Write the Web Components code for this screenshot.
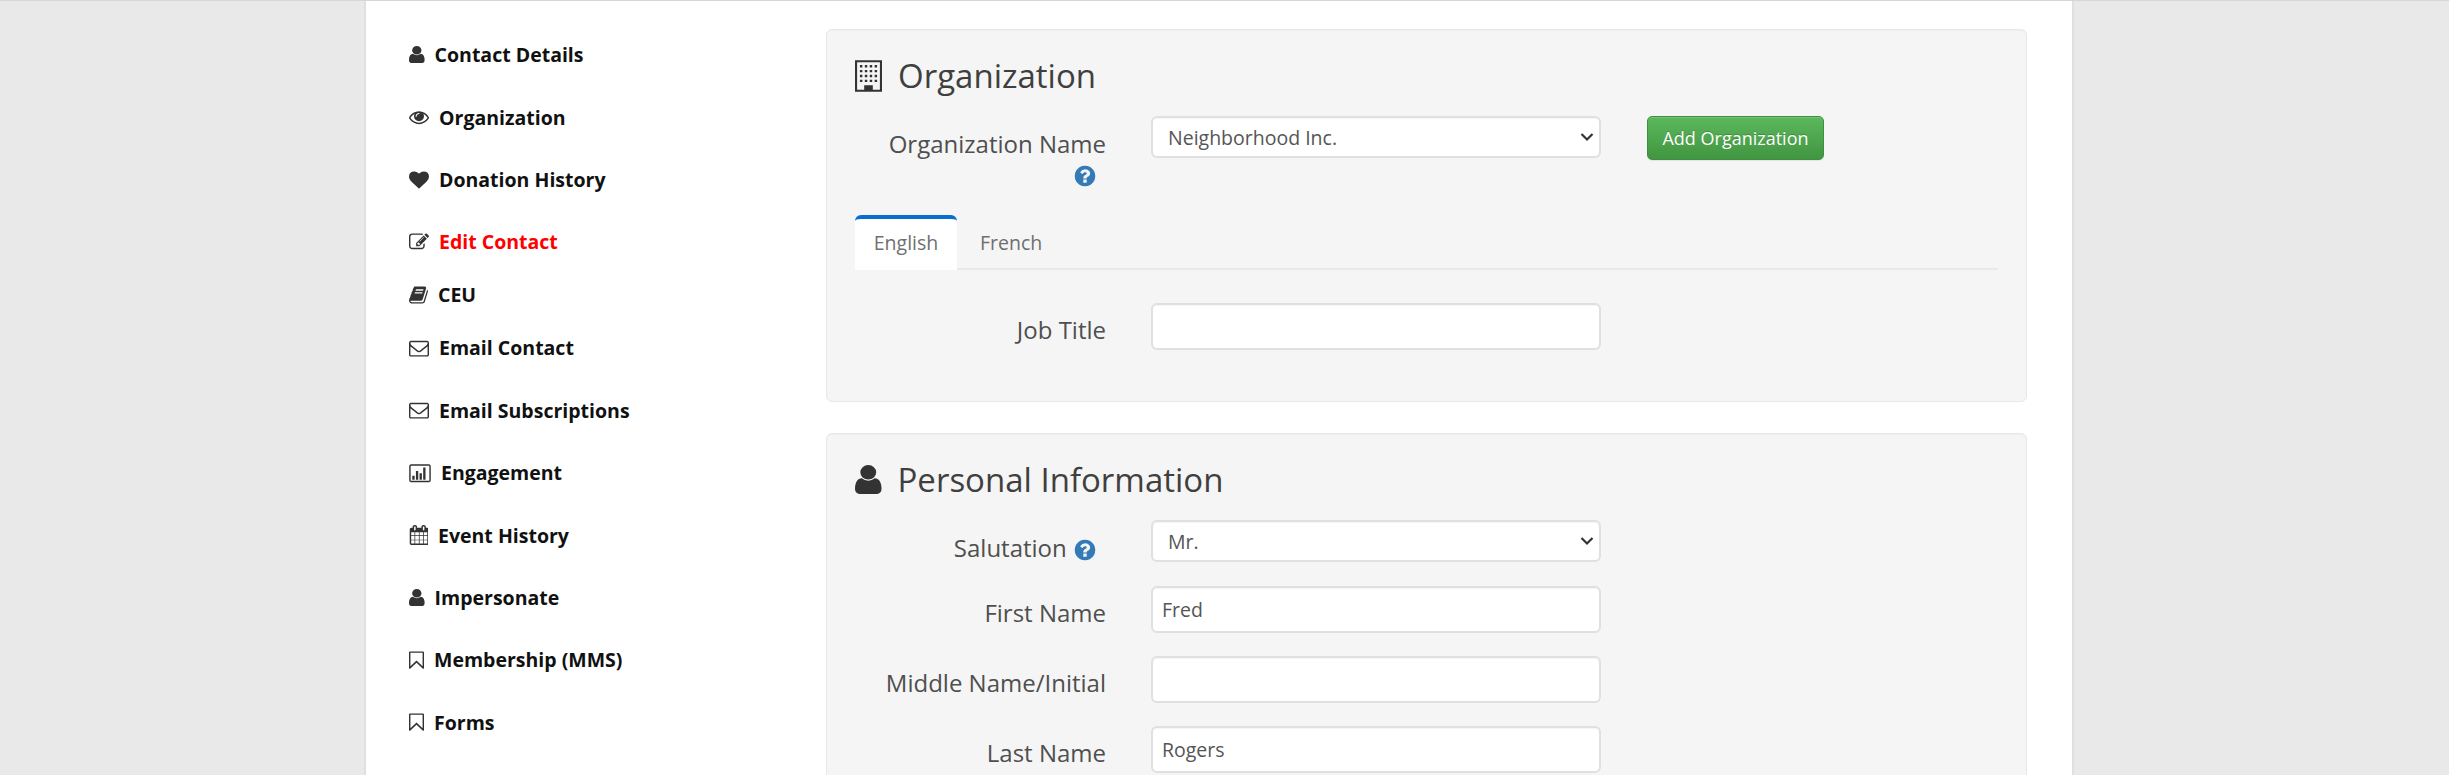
<!DOCTYPE html>
<html lang="en">
<head>
<meta charset="utf-8">
<title>Edit Contact</title>
<style>
  html, body { margin: 0; height: 775px; overflow: hidden; background: #e9e9e9; }
  body { font-family: "Open Sans", sans-serif; }
</style>
</head>
<body>
<contact-page>
  <side-nav slot="nav">
    <nav-item icon="user">Contact Details</nav-item>
    <nav-item icon="eye">Organization</nav-item>
    <nav-item icon="heart">Donation History</nav-item>
    <nav-item icon="edit" active>Edit Contact</nav-item>
    <nav-item icon="book" compact>CEU</nav-item>
    <nav-item icon="envelope">Email Contact</nav-item>
    <nav-item icon="envelope">Email Subscriptions</nav-item>
    <nav-item icon="chart">Engagement</nav-item>
    <nav-item icon="calendar">Event History</nav-item>
    <nav-item icon="user">Impersonate</nav-item>
    <nav-item icon="bookmark">Membership (MMS)</nav-item>
    <nav-item icon="bookmark">Forms</nav-item>
  </side-nav>

  <well-panel icon="building" heading="Organization">
    <form-row label="Organization Name" help="below" type="select" value="Neighborhood Inc.">
      <add-button slot="extra">Add Organization</add-button>
    </form-row>
    <tab-strip></tab-strip>
    <form-row label="Job Title"></form-row>
  </well-panel>

  <well-panel icon="user" heading="Personal Information">
    <form-row label="Salutation" help="inline" type="select" value="Mr."></form-row>
    <form-row label="First Name" value="Fred"></form-row>
    <form-row label="Middle Name/Initial"></form-row>
    <form-row label="Last Name" value="Rogers"></form-row>
  </well-panel>
</contact-page>

<script>
const ICONS = {
  user: { box: "256 128 1280 1536", w: 15.6, h: 17.1, d: "M1536 1399q0 109-62.5 187t-150.5 78h-854q-88 0-150.5-78t-62.5-187q0-85 8.5-160.5t31.5-152 58.5-131 94-89 134.5-34.5q131 128 313 128t313-128q76 0 134.5 34.5t94 89 58.5 131 31.5 152 8.5 160.5zm-256-887q0 159-112.5 271.5t-271.5 112.5-271.5-112.5-112.5-271.5 112.5-271.5 271.5-112.5 271.5 112.5 112.5 271.5z" },
  eye: { box: "0 0 1792 1792", w: 20, d: "M1664 960q-152-236-381-353 61 104 61 225 0 185-131.5 316.5t-316.5 131.5-316.5-131.5-131.5-316.5q0-121 61-225-229 117-381 353 133 205 333.5 326.5t434.5 121.5 434.5-121.5 333.5-326.5zm-720-384q0-20-14-34t-34-14q-125 0-214.5 89.5t-89.5 214.5q0 20 14 34t34 14 34-14 14-34q0-86 61-147t147-61q20 0 34-14t14-34zm848 384q0 34-20 69-140 230-376.5 368.5t-499.5 138.5-499.5-139-376.5-368q-20-35-20-69t20-69q140-229 376.5-368t499.5-139 499.5 139 376.5 368q20 35 20 69z" },
  heart: { box: "0 0 1792 1792", w: 20, d: "M896 1664q-26 0-44-18l-624-602q-10-8-27.5-26t-55.5-65.5-68-97.5-53.5-121-23.5-138q0-220 127-344t351-124q62 0 126.5 21.5t120 58 95.5 68.5 76 68q36-36 76-68t95.5-68.5 120-58 126.5-21.5q224 0 351 124t127 344q0 221-229 450l-623 600q-18 18-44 18z" },
  edit: { box: "0 0 1792 1792", w: 20, d: "M888 1184l116-116-152-152-116 116v56h96v96h56zm440-720q-16-16-33 1l-350 350q-17 17-1 33t33-1l350-350q17-17 1-33zm80 594v190q0 119-84.5 203.5t-203.5 84.5h-832q-119 0-203.5-84.5t-84.5-203.5v-832q0-119 84.5-203.5t203.5-84.5h832q63 0 117 25 15 7 18 23 3 17-9 29l-49 49q-14 14-32 8-23-6-45-6h-832q-66 0-113 47t-47 113v832q0 66 47 113t113 47h832q66 0 113-47t47-113v-126q0-13 9-22l64-64q15-15 35-7t20 29zm-96-738l288 288-672 672h-288v-288zm444 132l-92 92-288-288 92-92q28-28 68-28t68 28l152 152q28 28 28 68t-28 68z" },
  book: { box: "60 0 1672 1792", w: 19, d: "M1703 478q40 57 18 129l-275 906q-19 64-76.5 107.5t-122.5 43.5h-923q-77 0-148.5-53.5t-99.5-131.5q-24-67-2-127 0-4 3-27t4-37q1-8-3-21.5t-3-19.5q2-11 8-21t16.5-23.5 16.5-23.5q23-38 45-91.5t30-91.5q3-10 .5-30t-.5-28q3-11 17-28t17-23q21-36 42-92t25-90q1-9-2.5-32t.5-28q4-13 22-30.5t22-22.5q19-26 42.5-84.5t27.5-96.5q1-8-3-25.5t-2-26.5q2-8 9-18t18-23 17-21q8-12 16.5-30.5t15-35 16-36 19.5-32 26.5-23.5 36-11.5 47.5 5.5l-1 3q38-9 51-9h761q74 0 114 56t18 130l-274 906q-36 119-71.5 153.5t-128.5 34.5h-869q-27 0-38 15-11 16-1 43 24 70 144 70h923q29 0 56-15.5t35-41.5l300-987q7-22 5-57 38 15 59 43zm-1064 2q-4 13 2 22.5t20 9.5h608q13 0 25.5-9.5t16.5-22.5l21-64q4-13-2-22.5t-20-9.5h-608q-13 0-25.5 9.5t-16.5 22.5zm-83 256q-4 13 2 22.5t20 9.5h608q13 0 25.5-9.5t16.5-22.5l21-64q4-13-2-22.5t-20-9.5h-608q-13 0-25.5 9.5t-16.5 22.5z" },
  envelope: { box: "0 0 1792 1792", w: 20, d: "M1664 1504v-768q-32 36-69 66-268 206-426 338-51 43-83 67t-86.5 48.5-102.5 24.5h-2q-48 0-102.5-24.5t-86.5-48.5-83-67q-158-132-426-338-37-30-69-66v768q0 13 9.5 22.5t22.5 9.5h1472q13 0 22.5-9.5t9.5-22.5zm0-1051v-24.5l-.5-13-3-12.5-5.5-9-9-7.5-14-2.5h-1472q-13 0-22.5 9.5t-9.5 22.5q0 168 147 284 193 152 401 317 6 5 35 29.5t46 37.5 44.5 31.5 50.5 27.5 43 9h2q20 0 43-9t50.5-27.5 44.5-31.5 46-37.5 35-29.5q208-165 401-317 54-43 100.5-115.5t46.5-131.5zm128-37v1088q0 66-47 113t-113 47h-1472q-66 0-113-47t-47-113v-1088q0-66 47-113t113-47h1472q66 0 113 47t47 113z" },
  chart: { box: "0 0 2000 1792", w: 22, d: "M200 120h1600a180 180 0 0 1 180 180v1240a180 180 0 0 1-180 180H200a180 180 0 0 1-180-180V300a180 180 0 0 1 180-180zm0 130a50 50 0 0 0-50 50v1240a50 50 0 0 0 50 50h1600a50 50 0 0 0 50-50V300a50 50 0 0 0-50-50zM300 1150h210v340H300zm330-430h210v770H630zm330 200h210v570H960zm330-520h210v1090h-210z" },
  calendar: { box: "0 0 1664 1792", w: 19, d: "M192 1664h288v-288h-288v288zm352 0h320v-288h-320v288zm-352-352h288v-320h-288v320zm352 0h320v-320h-320v320zm-352-384h288v-288h-288v288zm736 736h320v-288h-320v288zm-384-736h320v-288h-320v288zm768 736h288v-288h-288v288zm-384-352h320v-320h-320v320zm-352-864v-288q0-13-9.5-22.5t-22.5-9.5h-64q-13 0-22.5 9.5t-9.5 22.5v288q0 13 9.5 22.5t22.5 9.5h64q13 0 22.5-9.5t9.5-22.5zm736 864h288v-320h-288v320zm-384-384h320v-288h-320v288zm384 0h288v-288h-288v288zm32-480v-288q0-13-9.5-22.5t-22.5-9.5h-64q-13 0-22.5 9.5t-9.5 22.5v288q0 13 9.5 22.5t22.5 9.5h64q13 0 22.5-9.5t9.5-22.5zm384-64v1280q0 52-38 90t-90 38h-1408q-52 0-90-38t-38-90v-1280q0-52 38-90t90-38h128v-96q0-66 47-113t113-47h64q66 0 113 47t47 113v96h384v-96q0-66 47-113t113-47h64q66 0 113 47t47 113v96h128q52 0 90 38t38 90z" },
  bookmark: { box: "0 0 1344 1792", w: 15, d: "M100 128h1144a100 100 0 0 1 100 100v1400a60 60 0 0 1-100 44L672 1150 100 1672a60 60 0 0 1-100-44V228a100 100 0 0 1 100-100zm28 128v1190l544-500 544 500V256z" },
  building: { box: "0 0 1408 1792", w: 15.9, d: "M0 64h1408v1664H0zm110 110v1444h370v-230h448v230h370V174zM256 320h128v128H256zm256 0h128v128H512zm256 0h128v128H768zm256 0h128v128h-128zM256 576h128v128H256zm256 0h128v128H512zm256 0h128v128H768zm256 0h128v128h-128zM256 832h128v128H256zm256 0h128v128H512zm256 0h128v128H768zm256 0h128v128h-128zM256 1088h128v128H256zm256 0h128v128H512zm256 0h128v128H768zm256 0h128v128h-128z" },
  question: { box: "0 0 1792 1792", w: 20, d: "M1024 1376v-192q0-14-9-23t-23-9h-192q-14 0-23 9t-9 23v192q0 14 9 23t23 9h192q14 0 23-9t9-23zm256-672q0-88-55.5-163t-138.5-116-170-41q-243 0-371 213-15 24 8 42l132 100q7 6 19 6 16 0 25-12 53-68 86-92 34-24 86-24 48 0 85.5 26t37.5 59q0 38-20 61t-68 45q-63 28-115.5 86.5t-52.5 125.5v36q0 14 9 23t23 9h192q14 0 23-9t9-23q0-19 21.5-49.5t54.5-49.5q32-18 49-28.5t46-35 44.5-48 28-60.5 12.5-81zm384 192q0 209-103 385.5t-279.5 279.5-385.5 103-385.5-103-279.5-279.5-103-385.5 103-385.5 279.5-279.5 385.5-103 385.5 103 279.5 279.5 103 385.5z" }
};

function iconSvg(name, height) {
  const icon = ICONS[name];
  const width = icon.w * height / 20;
  const glyphHeight = (icon.h || 20) * height / 20;
  return `<svg width="${width}" height="${glyphHeight}" viewBox="${icon.box}" preserveAspectRatio="none" fill="currentColor" aria-hidden="true"><path d="${icon.d}"/></svg>`;
}

class ContactPage extends HTMLElement {
  connectedCallback() {
    this.attachShadow({ mode: "open" }).innerHTML = `
      <style>
        :host { display: block; margin-left: 364px; width: 1710px; height: 775px; box-sizing: border-box; background: #fff; border-left: 2px solid #e0e0e0; border-right: 2px solid #e0e0e0; }
        .top { height: 1px; background: #d6d6d6; }
        .wrap { margin-left: -366px; width: 2449px; }
        .columns { display: grid; grid-template-columns: 460px 1201px; }
        .panels { display: flex; flex-direction: column; gap: 31px; padding-top: 28px; }
      </style>
      <div class="wrap"><div class="top"></div></div>
      <div class="columns">
        <slot name="nav"></slot>
        <div class="panels"><slot></slot></div>
      </div>`;
  }
}

class SideNav extends HTMLElement {
  connectedCallback() {
    this.attachShadow({ mode: "open" }).innerHTML = `
      <style>
        :host { display: block; padding: 22.6px 0 0 43px; }
      </style>
      <slot></slot>`;
  }
}

class NavItem extends HTMLElement {
  connectedCallback() {
    this.attachShadow({ mode: "open" }).innerHTML = `
      <style>
        :host { display: flex; align-items: center; gap: 10px; height: 62.4px; font-size: 19.5px; font-weight: 700; color: #111; }
        :host([compact]) { height: 43.6px; }
        :host([active]) { color: #f00; }
        svg { color: #333; flex: none; }
      </style>
      ${iconSvg(this.getAttribute("icon"), 20)}
      <span><slot></slot></span>`;
  }
}

class WellPanel extends HTMLElement {
  connectedCallback() {
    this.attachShadow({ mode: "open" }).innerHTML = `
      <style>
        :host { display: block; box-sizing: border-box; padding: 0 28px 51px 28px; background: #f5f5f5; border: 1px solid #e8e8e8; border-radius: 6px; box-shadow: inset 0 1px 1px rgba(0,0,0,.03); }
        h3 { display: flex; align-items: center; gap: 16px; height: 42px; margin: 0; padding: 25px 0 19px; font-size: 33px; font-weight: 400; line-height: 42px; color: #3f3f3f; box-sizing: content-box; }
        svg { color: #333; flex: none; }
      </style>
      <h3>${iconSvg(this.getAttribute("icon"), 34)}<span>${this.getAttribute("heading")}</span></h3>
      <slot></slot>`;
  }
}

class FormRow extends HTMLElement {
  connectedCallback() {
    const help = this.getAttribute("help");
    const value = this.getAttribute("value") || "";
    const name = this.getAttribute("label");
    const control = this.getAttribute("type") === "select"
      ? `<select aria-label="${name}"><option>${value}</option></select>
         <svg class="chevron" width="14" height="10" viewBox="0 0 14 10" aria-hidden="true"><path d="M1.5 2 7 7.5 12.5 2" fill="none" stroke="#333" stroke-width="2.2"/></svg>`
      : `<input type="text" value="${value}" aria-label="${name}">`;
    const q = help ? `<span class="help">${iconSvg("question", 24)}</span>` : "";
    this.attachShadow({ mode: "open" }).innerHTML = `
      <style>
        :host { display: grid; grid-template-columns: 251px 450px auto; column-gap: 45px; align-items: start; margin-bottom: 23px; }
        :host([help="inline"]) { height: 66px; margin-bottom: 0; }
        :host([help="below"]) { margin-bottom: 22px; }
        :host(:last-child) { margin-bottom: 0; }
        label { padding-top: 9.5px; font-size: 24px; line-height: 33px; color: #4f4f4f; text-align: right; }
        :host([type="select"]) label { padding-top: 11px; }
        .help { color: #337ab7; display: inline-block; height: 24px; vertical-align: -5px; margin-right: 9px; }
        :host([help="below"]) .help { display: block; height: 33px; margin-left: auto; width: 24px; padding: 4px 0 0 0; box-sizing: border-box; line-height: 0; }
        .control { position: relative; }
        .chevron { position: absolute; right: 7px; top: 16px; pointer-events: none; }
        input, select { display: block; box-sizing: border-box; width: 450px; border: 2px solid #e0e0e0; border-radius: 6px; background: #fff; color: #555; font: 400 19.5px "Open Sans", sans-serif; margin: 0; outline: none; box-shadow: inset 0 1px 1px rgba(0,0,0,.04); }
        input { height: 47px; padding: 0 9px; }
        select { height: 42px; padding: 0 8px 0 15px; appearance: none; }
        ::slotted([slot="extra"]) { margin-left: 1px; }
      </style>
      <label>${name}${help === "inline" ? " " : ""}${q}</label>
      <div class="control">${control}</div>
      <slot name="extra"></slot>`;
  }
}

class AddButton extends HTMLElement {
  connectedCallback() {
    this.attachShadow({ mode: "open" }).innerHTML = `
      <style>
        :host { display: block; }
        button { display: block; width: 177px; height: 44px; padding: 0; border: 1px solid #3e8f3e; border-radius: 5px; background: linear-gradient(#5cb85c, #419641); color: #fff; font: 400 18px "Open Sans", sans-serif; text-shadow: 0 -1px 0 rgba(0,0,0,.2); box-shadow: inset 0 1px 0 rgba(255,255,255,.15), 0 1px 1px rgba(0,0,0,.075); }
      </style>
      <button type="button"><slot></slot></button>`;
  }
}

class TabStrip extends HTMLElement {
  connectedCallback() {
    this.attachShadow({ mode: "open" }).innerHTML = `
      <style>
        :host { display: flex; height: 55px; margin-bottom: 33px; border-bottom: 2px solid #e9e9e9; box-sizing: border-box; width: 1143px; font-size: 19.5px; color: #6f6f6f; }
        span { display: flex; align-items: center; box-sizing: border-box; height: 55px; padding: 0 19px 1px; }
        .on { width: 102px; justify-content: center; padding: 0 0 5px; background: #fff; border-top: 4px solid #0a6ed1; border-radius: 6px 6px 0 0; }
        span + span { margin-left: 4px; }
      </style>
      <span class="on">English</span><span>French</span>`;
  }
}

customElements.define("contact-page", ContactPage);
customElements.define("side-nav", SideNav);
customElements.define("nav-item", NavItem);
customElements.define("well-panel", WellPanel);
customElements.define("form-row", FormRow);
customElements.define("add-button", AddButton);
customElements.define("tab-strip", TabStrip);
</script>
</body>
</html>
